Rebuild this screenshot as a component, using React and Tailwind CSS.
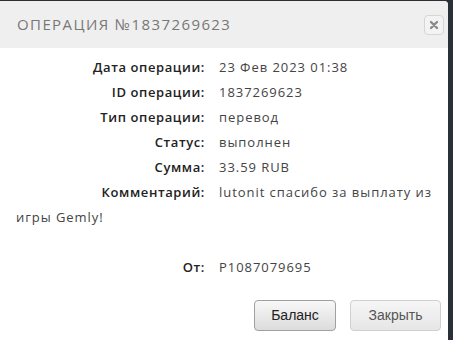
import React from "react";

const rows = [
  ["Дата операции:", "23 Фев 2023 01:38"],
  ["ID операции:", "1837269623"],
  ["Тип операции:", "перевод"],
  ["Статус:", "выполнен"],
  ["Сумма:", "33.59 RUB"],
];

function Row({ label, value }) {
  return (
    <div className="leading-[25px]">
      <span className="inline-block w-[189px] text-right font-semibold text-[#222] mr-[14px] tracking-[0.6px]">{label}</span>
      <span className="text-[#444] tracking-[0.95px]">{value}</span>
    </div>
  );
}

export default function App() {
  return (
    <div className="w-[453px] h-[340px] bg-[#2b3036] overflow-hidden">
      <div
        className="w-[448px] h-[339px] mt-[1px] bg-white rounded-tr-[4px] flex flex-col"
        style={{ fontFamily: "'Open Sans', sans-serif" }}
      >
        <div className="h-[47px] bg-[#efefef] rounded-tr-[4px] flex items-center justify-between pl-[17px] pr-[4px]">
          <span className="text-[15px] tracking-[1.4px] text-[#777] font-normal">ОПЕРАЦИЯ №1837269623</span>
          <div className="w-[20px] h-[20px] border border-[#d6d6d6] rounded-[4px] bg-[#f3f3f3] flex items-center justify-center">
            <svg width="10" height="10" viewBox="0 0 10 10">
              <path d="M2 2 L8 8 M8 2 L2 8" stroke="#8a8a8a" strokeWidth="2.4" strokeLinecap="round" />
            </svg>
          </div>
        </div>
        <div className="pt-[7px] pl-[16px] pr-[8px] text-[13px] text-[#333]">
          {rows.map(([l, v]) => (
            <Row key={l} label={l} value={v} />
          ))}
          <div className="leading-[25px]">
            <span className="inline-block w-[189px] text-right font-semibold text-[#222] mr-[14px] tracking-[0.6px]">Комментарий:</span>
            <span className="text-[#444] tracking-[0.95px]">lutonit спасибо за выплату из игры Gemly!</span>
          </div>
          <div className="h-[25px]" />
          <Row label="От:" value="P1087079695" />
        </div>
        <div className="flex justify-end gap-[14px] pr-[7px] mt-[20px]" style={{ fontFamily: "'Liberation Sans', Arial, sans-serif" }}>
          <button className="w-[82px] h-[31px] rounded-[4px] border border-[#a0a0a0] bg-gradient-to-b from-[#f8f8f8] to-[#dcdcdc] text-[14px] text-[#222]">
            Баланс
          </button>
          <button className="w-[91px] h-[31px] rounded-[4px] border border-[#d0d0d0] bg-gradient-to-b from-[#f6f6f6] to-[#e6e6e6] text-[14px] text-[#555]">
            Закрыть
          </button>
        </div>
      </div>
    </div>
  );
}
